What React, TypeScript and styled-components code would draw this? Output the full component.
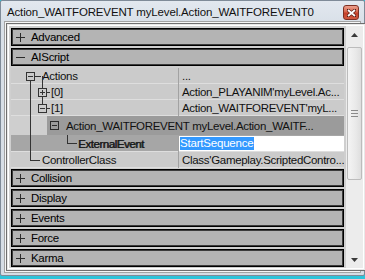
import React from "react";
import styled, { createGlobalStyle } from "styled-components";

const Global = createGlobalStyle`
  html, body { margin: 0; padding: 0; background: #2ec4da; }
  body { width: 365px; height: 279px; overflow: hidden; }
`;

const Window = styled.div`
  width: 365px;
  height: 276px;
  background: linear-gradient(#e2e8ef, #d9e0e8 22px, #d6dde5);
  box-sizing: border-box;
  border: 1px solid #7f8b98;
  border-radius: 2px;
  display: flex;
  flex-direction: column;
  font-family: "Liberation Sans", Arial, sans-serif;
`;

const TitleBar = styled.div`
  height: 20px;
  flex: none;
  display: flex;
  align-items: center;
  justify-content: space-between;
  padding: 1px 5px 0 6px;
  box-sizing: border-box;
`;

const Title = styled.div`
  font-size: 11.5px;
  color: #111;
  letter-spacing: -0.15px;
`;

const Close = styled.div`
  width: 16px;
  height: 15px;
  border: 1px solid #7d2f22;
  border-radius: 3px;
  background: linear-gradient(#eba08e, #d8644b 45%, #c4402a 55%, #d0583f);
  display: flex;
  align-items: center;
  justify-content: center;
  box-sizing: border-box;
  margin-top: 2px;
`;

const Frame = styled.div`
  margin: 0 3px 3px 3px;
  flex: 1;
  border: 1px solid #a3a3a3;
  background: #f6f6f6;
  padding: 1px;
  display: flex;
`;

const Inner = styled.div`
  flex: 1;
  border: 1px solid #6f6f6f;
  background: #e8e8e8;
  padding: 1px;
  display: flex;
`;

const Content = styled.div`
  flex: 1;
  border: 1px solid #ffffff;
  background: #d2d2d2;
  display: flex;
  padding-left: 1px;
`;

const List = styled.div`
  flex: 1;
  background: #cfcfcf;
  display: flex;
  flex-direction: column;
  padding: 2px 2px 1px 1px;
  font-size: 11.5px;
  letter-spacing: -0.3px;
`;

const Category = styled.div`
  height: 18px;
  flex: none;
  box-sizing: border-box;
  border: 1px solid #000;
  box-shadow: inset 0 0 0 1px #3c3c3c;
  background: #b4b4b4;
  margin-bottom: 2px;
  display: flex;
  align-items: center;
  color: #000;
  &:last-child {
    margin-bottom: 0;
  }
`;

const Sign = styled.span`
  width: 17px;
  height: 16px;
  display: flex;
  align-items: center;
  justify-content: center;
  margin-right: 2px;
`;

const Tree = styled.div`
  position: relative;
  margin-bottom: 1px;
  flex: none;
`;

const Row = styled.div<{ $bg?: string; $h?: number }>`
  height: ${(p) => p.$h || 16}px;
  display: flex;
  background: ${(p) => p.$bg || "#cbcbcb"};
  box-shadow: inset 0 -1px 0 #dedede;
  box-sizing: border-box;
`;

const NameCell = styled.div<{ $indent: number }>`
  width: 168px;
  flex: none;
  box-sizing: border-box;
  padding-left: ${(p) => p.$indent}px;
  border-right: 1px solid #a2a2a2;
  display: flex;
  align-items: center;
  white-space: nowrap;
  color: #111;
`;

const EventName = styled.span`
  color: #1c1c1c;
  text-shadow: 0.6px 0 0 #1c1c1c;
  letter-spacing: -0.45px;
`;

const ValueCell = styled.div`
  flex: 1;
  padding-left: 3px;
  display: flex;
  align-items: center;
  white-space: nowrap;
  overflow: hidden;
  color: #111;
`;

const EditBox = styled.div`
  flex: 1;
  margin: 1px 0 1px 0;
  padding-left: 1px;
  background: #fff;
  display: flex;
  align-items: center;
`;

const Selected = styled.span`
  background: #3399ff;
  color: #fff;
  padding: 0 1px 1px 0;
  letter-spacing: -0.2px;
`;

const Header = styled.div`
  height: 19px;
  margin-left: 36px;
  background: #9b9b9b;
  display: flex;
  align-items: center;
  white-space: nowrap;
  color: #111;
  padding-left: 3px;
`;

const HeaderBox = styled.span`
  width: 9px;
  height: 9px;
  border: 1px solid #2a2a2a;
  box-sizing: border-box;
  position: relative;
  margin-right: 7px;
  &::before {
    content: "";
    position: absolute;
    left: 1px;
    right: 1px;
    top: 3px;
    height: 1px;
    background: #2a2a2a;
  }
`;

const Node = styled.span<{ $x: number; $y: number; $plus?: boolean }>`
  position: absolute;
  left: ${(p) => p.$x}px;
  top: ${(p) => p.$y}px;
  width: 9px;
  height: 9px;
  box-sizing: border-box;
  border: 1px solid #333;
  background: #cbcbcb;
  &::before {
    content: "";
    position: absolute;
    left: 1px;
    right: 1px;
    top: 3px;
    height: 1px;
    background: #333;
  }
  &::after {
    content: "";
    display: ${(p) => (p.$plus ? "block" : "none")};
    position: absolute;
    top: 1px;
    bottom: 1px;
    left: 3px;
    width: 1px;
    background: #333;
  }
`;

const HLine = styled.span<{ $x: number; $y: number; $w: number }>`
  position: absolute;
  left: ${(p) => p.$x}px;
  top: ${(p) => p.$y}px;
  width: ${(p) => p.$w}px;
  height: 1px;
  background: #333;
`;

const VLine = styled.span<{ $x: number; $y: number; $h: number }>`
  position: absolute;
  left: ${(p) => p.$x}px;
  top: ${(p) => p.$y}px;
  width: 1px;
  height: ${(p) => p.$h}px;
  background: #333;
`;

const Scrollbar = styled.div`
  width: 17px;
  flex: none;
  background: #ececec;
  display: flex;
  flex-direction: column;
  align-items: center;
`;

const Arrow = styled.div`
  height: 17px;
  width: 17px;
  flex: none;
  display: flex;
  align-items: center;
  justify-content: center;
`;

const Thumb = styled.div`
  width: 15px;
  height: 133px;
  flex: none;
  margin-top: 4px;
  border: 1px solid #bcbcbc;
  border-radius: 2px;
  background: linear-gradient(90deg, #f4f4f4, #e9e9e9 60%, #dedede);
  box-sizing: border-box;
  display: flex;
  align-items: center;
  justify-content: center;
`;

const Track = styled.div`
  flex: 1;
`;

const PlusIcon = () => (
  <svg width="9" height="9" viewBox="0 0 9 9">
    <path d="M0 4.5 H9 M4.5 0 V9" stroke="#2a2a2a" strokeWidth="1" />
  </svg>
);

const MinusIcon = () => (
  <svg width="9" height="9" viewBox="0 0 9 9">
    <path d="M0 4.5 H9" stroke="#2a2a2a" strokeWidth="1" />
  </svg>
);

const categoriesAfter = ["Collision", "Display", "Events", "Force", "Karma"];

export default function App() {
  return (
    <>
      <Global />
      <Window>
        <TitleBar>
          <Title>Action_WAITFOREVENT myLevel.Action_WAITFOREVENT0</Title>
          <Close>
            <svg width="9" height="8" viewBox="0 0 9 8">
              <path
                d="M1 1 L8 7 M8 1 L1 7"
                stroke="#5a1d12"
                strokeWidth="3.2"
                strokeLinecap="square"
              />
              <path d="M1 1 L8 7 M8 1 L1 7" stroke="#fff" strokeWidth="1.8" />
            </svg>
          </Close>
        </TitleBar>
        <Frame>
          <Inner>
            <Content>
              <List>
                <Category>
                  <Sign>
                    <PlusIcon />
                  </Sign>
                  Advanced
                </Category>
                <Category>
                  <Sign>
                    <MinusIcon />
                  </Sign>
                  AIScript
                </Category>
                <Tree>
                  <Row>
                    <NameCell $indent={31}>Actions</NameCell>
                    <ValueCell>...</ValueCell>
                  </Row>
                  <Row>
                    <NameCell $indent={40}>[0]</NameCell>
                    <ValueCell>Action_PLAYANIM'myLevel.Ac...</ValueCell>
                  </Row>
                  <Row>
                    <NameCell $indent={40}>[1]</NameCell>
                    <ValueCell>Action_WAITFOREVENT'myL...</ValueCell>
                  </Row>
                  <Header>
                    <HeaderBox />
                    Action_WAITFOREVENT myLevel.Action_WAITF...
                  </Header>
                  <Row $bg="#a6a6a6" $h={17}>
                    <NameCell $indent={67}>
                      <EventName>ExternalEvent</EventName>
                    </NameCell>
                    <EditBox>
                      <Selected>StartSequence</Selected>
                    </EditBox>
                  </Row>
                  <Row>
                    <NameCell $indent={31}>ControllerClass</NameCell>
                    <ValueCell>Class'Gameplay.ScriptedContro...</ValueCell>
                  </Row>
                  <VLine $x={19} $y={12} $h={81} />
                  <HLine $x={19} $y={92} $w={10} />
                  <HLine $x={23} $y={8} $w={7} />
                  <VLine $x={31} $y={8} $h={28} />
                  <HLine $x={35} $y={24} $w={4} />
                  <HLine $x={35} $y={40} $w={4} />
                  <VLine $x={56} $y={67} $h={9} />
                  <HLine $x={56} $y={75} $w={10} />
                  <Node $x={15} $y={4} />
                  <Node $x={27} $y={20} $plus />
                  <Node $x={27} $y={36} />
                </Tree>
                {categoriesAfter.map((c) => (
                  <Category key={c}>
                    <Sign>
                      <PlusIcon />
                    </Sign>
                    {c}
                  </Category>
                ))}
              </List>
              <Scrollbar>
                <Arrow>
                  <svg width="7" height="4" viewBox="0 0 7 4">
                    <path d="M0 4 L3.5 0 L7 4 Z" fill="#3a3a3a" />
                  </svg>
                </Arrow>
                <Thumb>
                  <svg width="7" height="7" viewBox="0 0 7 7">
                    <path d="M0 0.5 H7 M0 3.5 H7 M0 6.5 H7" stroke="#8a8a8a" strokeWidth="1" />
                  </svg>
                </Thumb>
                <Track />
                <Arrow>
                  <svg width="7" height="4" viewBox="0 0 7 4">
                    <path d="M0 0 L7 0 L3.5 4 Z" fill="#3a3a3a" />
                  </svg>
                </Arrow>
              </Scrollbar>
            </Content>
          </Inner>
        </Frame>
      </Window>
    </>
  );
}
